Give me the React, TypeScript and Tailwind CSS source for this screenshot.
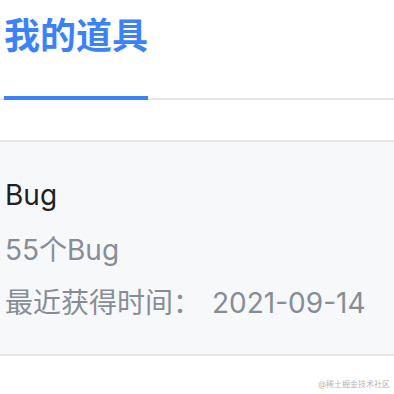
const sans = "font-['Inter','Noto_Sans_CJK_SC',sans-serif]";

export default function App() {
  return (
    <div className={`relative h-[394px] w-[394px] overflow-hidden bg-white ${sans}`}>
      {/* Tabs */}
      <div className="flex border-b-2 border-[#e5e7eb] px-1">
        <div className="flex flex-col">
          <span className="pt-[18px] text-[36px] font-bold leading-[36px] text-[#3b82f6]">我的道具</span>
          <div className="-mb-[2px] mt-[42px] h-1 bg-[#3b82f6]" />
        </div>
      </div>

      {/* Item card */}
      <div className="mt-10 border-y-2 border-[#e5e7eb] bg-[#f7f8fa] pb-[31px] pl-[5px] pt-[33px] text-[28px] leading-[40px]">
        <div className="text-[#1f2023]">Bug</div>
        <div className="mt-[15px] text-[#878d96]">55个Bug</div>
        <div className="mt-[13px] text-[#878d96]">
          最近获得时间：<span className="ml-[11px]">2021-09-14</span>
        </div>
      </div>

      <span className="absolute bottom-[5px] right-[4px] text-[8px] leading-[10px] text-[#b4b4b4]">@稀土掘金技术社区</span>
    </div>
  );
}
